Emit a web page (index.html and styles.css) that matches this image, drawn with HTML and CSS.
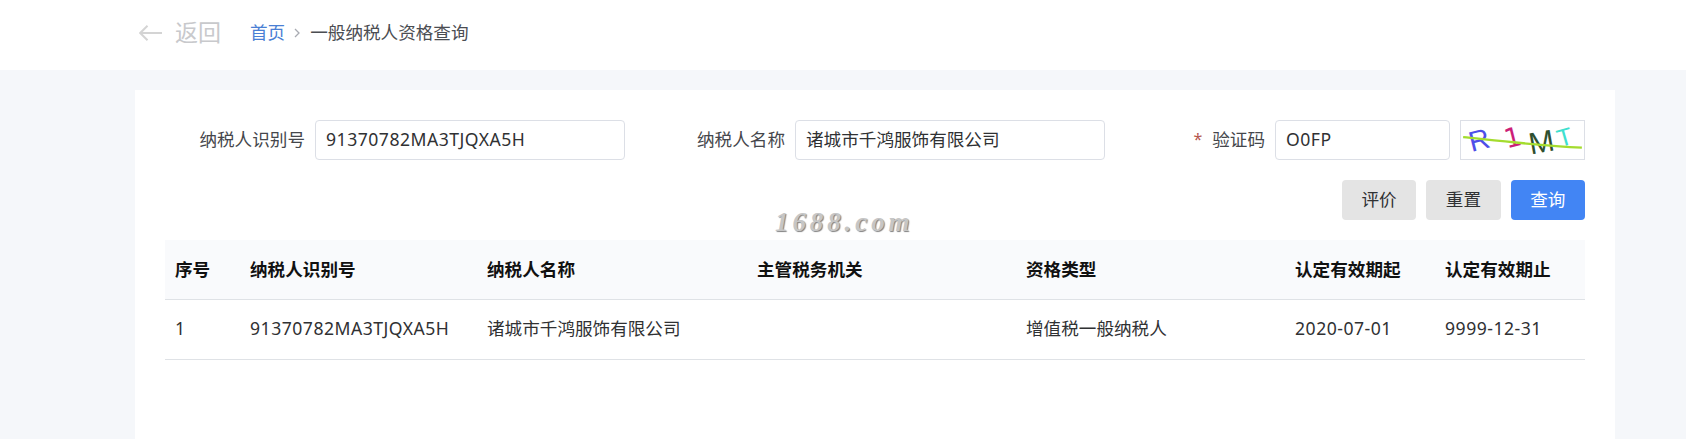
FILE: index.html
```html
<!DOCTYPE html>
<html lang="zh-CN">
<head>
<meta charset="utf-8">
<title>一般纳税人资格查询</title>
<link rel="stylesheet" href="styles.css">
</head>
<body>
<header class="topbar">
  <a class="back">
    <svg class="back-icon" viewBox="0 0 23 16" width="23" height="16"><path d="M0.5 8H23M8.5 0.8L1.2 8L8.5 15.2" fill="none" stroke="#d4d4d4" stroke-width="2"/></svg>
    <span>返回</span>
  </a>
  <nav class="crumbs">
    <a class="crumb-link">首页</a>
    <svg class="crumb-sep" viewBox="0 0 6 10" width="6" height="10"><path d="M1 1L5 5L1 9" fill="none" stroke="#a8abb2" stroke-width="1.3"/></svg>
    <span class="crumb-now">一般纳税人资格查询</span>
  </nav>
</header>
<main class="card">
  <div class="watermark">1688.com</div>
  <form class="form-row">
    <div class="field field-a"><label class="label">纳税人识别号</label><div class="input input-a latin">91370782MA3TJQXA5H</div></div>
    <div class="field field-b"><label class="label">纳税人名称</label><div class="input input-b">诸城市千鸿服饰有限公司</div></div>
    <div class="field field-c"><span class="req">*</span><label class="label">验证码</label><div class="input input-c latin">O0FP</div>
      <svg class="captcha" viewBox="0 0 125 40" width="125" height="40">
        <text class="cap" x="6" y="30" fill="#4f4fe8" transform="rotate(-14 18 20)">R</text>
        <text class="cap cap-one" x="43" y="27" fill="#cc1f78" transform="rotate(-14 52 16)">1</text>
        <text class="cap cap-m" x="69" y="33" fill="#2f4f2f" transform="rotate(-10 83 22)">M</text>
        <text class="cap cap-t" x="99" y="26" fill="#3fe0cf" transform="rotate(-16 107 17)">T</text>
        <path d="M0 17C30 20 80 26 125 28" fill="none" stroke="#a4dc2e" stroke-width="2.4"/>
      </svg>
    </div>
  </form>
  <div class="actions">
    <button class="btn" type="button">评价</button>
    <button class="btn" type="button">重置</button>
    <button class="btn btn-primary" type="button">查询</button>
  </div>
  <table class="table">
    <colgroup>
      <col class="c1"><col class="c2"><col class="c3"><col class="c4"><col class="c5"><col class="c6"><col class="c7">
    </colgroup>
    <thead>
      <tr><th>序号</th><th>纳税人识别号</th><th>纳税人名称</th><th>主管税务机关</th><th>资格类型</th><th>认定有效期起</th><th>认定有效期止</th></tr>
    </thead>
    <tbody>
      <tr><td class="latin">1</td><td class="latin">91370782MA3TJQXA5H</td><td>诸城市千鸿服饰有限公司</td><td></td><td>增值税一般纳税人</td><td class="latin">2020-07-01</td><td class="latin">9999-12-31</td></tr>
    </tbody>
  </table>
</main>
</body>
</html>
```
FILE: styles.css
```css
* { box-sizing: border-box; }
html, body { margin: 0; height: 100%; }
body {
  background: #f5f7fa;
  color: #303133;
  font-family: "Noto Sans", "Noto Sans CJK SC", sans-serif;
  font-size: 17.6px;
  line-height: 1.2;
  overflow: hidden;
}
.latin { letter-spacing: 0.5px; }
.topbar {
  height: 70px;
  background: #fff;
  display: flex;
  align-items: center;
  padding: 0 0 4px 139px;
}
.back {
  display: flex;
  align-items: center;
  gap: 13px;
  color: #c8c9cc;
  font-size: 23px;
  width: 111px;
}
.crumbs { display: flex; align-items: center; gap: 9px; }
.crumb-link { color: #4a7fd4; }
.crumb-sep { margin-right: 1px; }
.crumb-now { color: #4b4d52; }
.card {
  position: relative;
  margin: 20px 71px 0 135px;
  background: #fff;
  padding: 30px 30px 0;
  height: 349px;
}
.watermark {
  position: absolute;
  left: 640px;
  top: 117px;
  font: italic bold 27px "Liberation Serif", serif;
  letter-spacing: 3.9px;
  color: #c6c6c6;
  text-shadow: 1px 1px 1px #808080;
}
.form-row { display: flex; height: 40px; }
.field { display: flex; align-items: center; justify-content: flex-end; }
.field-a { width: 460px; }
.field-b { width: 480px; }
.field-c { width: 480px; }
.label { margin-right: 10px; color: #45474c; }
.req { color: #b5574f; margin-right: 10px; font-size: 16px; }
.input {
  height: 40px;
  border: 1px solid #dcdfe6;
  border-radius: 4px;
  padding: 0 10px;
  display: flex;
  align-items: center;
  background: #fff;
  color: #303133;
}
.input-a { width: 310px; }
.input-b { width: 310px; }
.input-c { width: 175px; margin-right: 10px; }
.captcha { border: 1px solid #dcdfe6; display: block; }
.cap { font: 30px "Liberation Sans", sans-serif; }
.cap-one { font: 28px "DejaVu Sans", sans-serif; }
.cap-m { font-size: 32px; }
.cap-t { font-size: 26px; }
.actions { display: flex; justify-content: flex-end; gap: 10px; margin-top: 20px; }
.btn {
  height: 40px;
  border: 0;
  border-radius: 4px;
  background: #e4e4e4;
  color: #303133;
  font: inherit;
  padding: 0 19.6px;
}
.btn-primary { background: #4285f4; color: #fff; }
.table {
  width: 1420px;
  margin-top: 20px;
  border-collapse: collapse;
  table-layout: fixed;
}
.c1 { width: 75px; }
.c2 { width: 237px; }
.c3 { width: 270px; }
.c4 { width: 269px; }
.c5 { width: 269px; }
.c6 { width: 150px; }
.c7 { width: 150px; }
.table th, .table td {
  padding: 0 10px;
  text-align: left;
  border-bottom: 1px solid #dfe2e6;
}
.table th { height: 59px; background: #f9fafc; color: #111; font-weight: 700; }
.table td { height: 60px; color: #303133; }
```
